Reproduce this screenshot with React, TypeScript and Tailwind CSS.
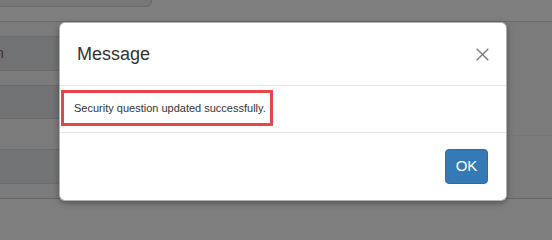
const font = { fontFamily: '"Liberation Sans", Arial, sans-serif' };

function CloseIcon() {
  return (
    <svg width="13" height="13" viewBox="0 0 13 13" fill="none" stroke="#7b7b7b" strokeWidth="1.4">
      <path d="M0.7 0.7 L12.3 12.3 M12.3 0.7 L0.7 12.3" />
    </svg>
  );
}

function BackgroundPage() {
  return (
    <div className="flex h-full w-full flex-col bg-[#7f7f7f]">
      {/* top strip with the bottom of a card */}
      <div className="h-[22px] border-b border-[#6c6c6c]">
        <div className="-ml-4 h-[7px] w-[168px] rounded-br-[6px] border-b border-r border-[#6a6a6a] bg-[#777777]" />
      </div>
      {/* form rows under the dialog */}
      <div className="flex h-[177px] border-b border-[#666666] bg-[#7b7b7b]">
        <div className="flex w-[300px] flex-col">
          <div className="h-[15px] border-b border-[#6b6b6b]" />
          <div className="flex h-[34px] items-center overflow-hidden border-b border-[#6b6b6b] bg-[#717273]">
            <span className="-ml-[4px] text-[14px] text-[#4a2a20]">n</span>
          </div>
          <div className="h-[15px] border-b border-[#6b6b6b]" />
          <div className="h-[33px] border-b border-[#6b6b6b] bg-[#717273]" />
          <div className="h-[31px] border-b border-[#6a6e72]" />
          <div className="h-[34px] border-b border-[#6a6e72] bg-[#727476]" />
          <div className="flex-1" />
        </div>
        <div className="flex flex-1 flex-col">
          <div className="h-[114px] border-b border-[#777777]" />
        </div>
      </div>
    </div>
  );
}

export default function App() {
  return (
    <div className="relative h-[240px] w-[552px] overflow-hidden" style={font}>
      <BackgroundPage />

      {/* modal layer */}
      <div className="absolute inset-0 pl-[59px] pt-[22px]">
        <div className="flex h-[179px] w-[448px] flex-col rounded-[6px] border border-black/30 bg-white shadow-[0_2px_6px_rgba(0,0,0,0.35)]">
          <div className="flex h-[63px] items-center justify-between border-b border-[#e5e5e5] pl-[17px] pr-[17px]">
            <h4 className="text-[18px] leading-none text-[#333333]">Message</h4>
            <button type="button" className="flex items-center">
              <CloseIcon />
            </button>
          </div>

          <div className="h-[46px] pl-[1px] pt-[4px]">
            <div className="flex h-[36px] w-[212px] items-center border-[3px] border-[#e8454a] pl-[10px]">
              <p className="whitespace-nowrap text-[11px] text-[#333333]">
                Security question updated successfully.
              </p>
            </div>
          </div>

          <div className="flex flex-1 items-center justify-end border-t border-[#e5e5e5] pr-[18px]">
            <button
              type="button"
              className="flex h-[35px] w-[43px] items-center justify-center rounded-[4px] border border-[#2e6da4] bg-[#337ab7] text-[15px] text-white"
            >
              OK
            </button>
          </div>
        </div>
      </div>
    </div>
  );
}
